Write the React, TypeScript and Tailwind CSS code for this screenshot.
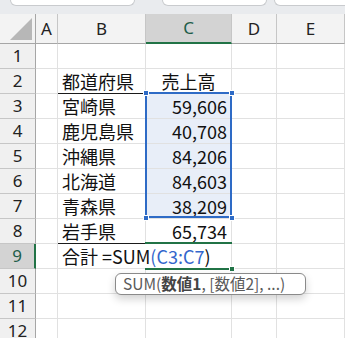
import React from "react";

const rows: { n: number; b?: string; c?: string }[] = [
  { n: 1 },
  { n: 2, b: "都道府県", c: "売上高" },
  { n: 3, b: "宮崎県", c: "59,606" },
  { n: 4, b: "鹿児島県", c: "40,708" },
  { n: 5, b: "沖縄県", c: "84,206" },
  { n: 6, b: "北海道", c: "84,603" },
  { n: 7, b: "青森県", c: "38,209" },
  { n: 8, b: "岩手県", c: "65,734" },
  { n: 9 },
  { n: 10 },
  { n: 11 },
  { n: 12 },
];

const cell = "h-[25px] border-r border-b border-[#e1e1e1]";
const jp = "font-['Noto_Sans_CJK_JP',sans-serif] text-[18px] text-[#111]";

function Handle({ className }: { className: string }) {
  return <div className={`absolute w-[6px] h-[6px] bg-[#2e6bc6] border border-white ${className}`} />;
}

export default function App() {
  return (
    <div className="w-[345px] h-[338px] overflow-hidden bg-white relative">
      {/* toolbar strip */}
      <div className="h-[14px] bg-[#e9ebee] flex items-start">
        <div className="ml-[10px] w-[125px] h-[6px] bg-white border border-t-0 border-[#c9cbce] rounded-b-[6px]" />
        <div className="ml-[27px] w-[105px] h-[6px] bg-white border border-t-0 border-[#c9cbce] rounded-b-[6px]" />
        <div className="ml-[7px] flex-1 h-[6px] bg-white border border-t-0 border-r-0 border-[#c9cbce] rounded-bl-[6px]" />
      </div>

      <div className="relative">
        <div className="grid grid-cols-[36px_22px_88px_86px_45px_68px] font-['Noto_Sans',sans-serif]">
          {/* column headers */}
          <div className="h-[30px] bg-[#f3f3f3] border-r border-b border-[#a6a6a6] flex items-end justify-end pr-[3px] pb-[3px]">
            <svg width="22" height="22" viewBox="0 0 22 22">
              <polygon points="22,0 22,22 0,22" fill="#b7b7b7" />
            </svg>
          </div>
          {["A", "B", "C", "D", "E"].map((l) => (
            <div
              key={l}
              className={`h-[30px] border-r flex items-center justify-center text-[17px] ${
                l === "C"
                  ? "bg-[#d3d3d3] border-b-[2px] border-b-[#217346] border-r-[#c6c6c6] text-[#1e5e4a]"
                  : "bg-[#f3f3f3] border-b border-b-[#a6a6a6] border-r-[#c6c6c6] text-[#222]"
              }`}
            >
              {l}
            </div>
          ))}

          {rows.map((r) => (
            <React.Fragment key={r.n}>
              <div
                className={`h-[25px] border-b border-b-[#c6c6c6] flex items-center justify-center text-[17px] ${
                  r.n === 9
                    ? "bg-[#d3d3d3] border-r-[2px] border-r-[#217346] text-[#1e5e4a]"
                    : "bg-[#f0f0f0] border-r border-r-[#a6a6a6] text-[#222]"
                }`}
              >
                {r.n}
              </div>
              <div className={cell} />
              {r.n === 9 ? (
                <div className={`${cell} col-span-2 flex items-center pl-[4px] ${jp} whitespace-nowrap`}>
                  合計 =SUM<span className="text-[#3366cc]">(C3:C7</span>)
                </div>
              ) : (
                <>
                  <div
                    className={`${cell} flex items-center pl-[4px] ${jp} ${
                      r.n === 2 || r.n === 8 ? "border-b-[#1a1a1a]" : ""
                    }`}
                  >
                    {r.b}
                  </div>
                  <div
                    className={`${cell} flex items-center ${jp} ${
                      r.n === 2 ? "justify-center" : "justify-end pr-[4px]"
                    } ${r.n >= 3 && r.n <= 7 ? "bg-[#e8eef8]" : ""}`}
                  >
                    {r.c}
                  </div>
                </>
              )}
              <div className={cell} />
              <div className={cell} />
            </React.Fragment>
          ))}
        </div>

        {/* selection C3:C7 */}
        <div className="absolute left-[145px] top-[78px] w-[87px] h-[126px] border-[2px] border-[#2e6bc6]" />
        <Handle className="left-[143px] top-[76px]" />
        <Handle className="left-[229px] top-[76px]" />
        <Handle className="left-[143px] top-[201px]" />
        <Handle className="left-[229px] top-[201px]" />

        {/* active cell C9 */}
        <div className="absolute left-[145px] top-[228px] w-[87px] h-[2px] bg-[#217346]" />
        <div className="absolute left-[145px] top-[254px] w-[87px] h-[2px] bg-[#217346]" />
        <div className="absolute left-[229px] top-[252px] w-[6px] h-[6px] bg-[#217346] border border-white" />

        {/* function tooltip */}
        <div className="absolute left-[115px] top-[259px] w-[191px] h-[22px] bg-white border border-[#8a8a8a] rounded-[6px] shadow-[0_4px_8px_rgba(0,0,0,0.18)] flex items-center pl-[7px] font-['Noto_Sans_CJK_JP',sans-serif] text-[15.5px] text-[#5a5a5a] whitespace-nowrap">
          SUM(<span className="font-bold text-[#444]">数値1</span>, [数値2], ...)
        </div>
      </div>
    </div>
  );
}
